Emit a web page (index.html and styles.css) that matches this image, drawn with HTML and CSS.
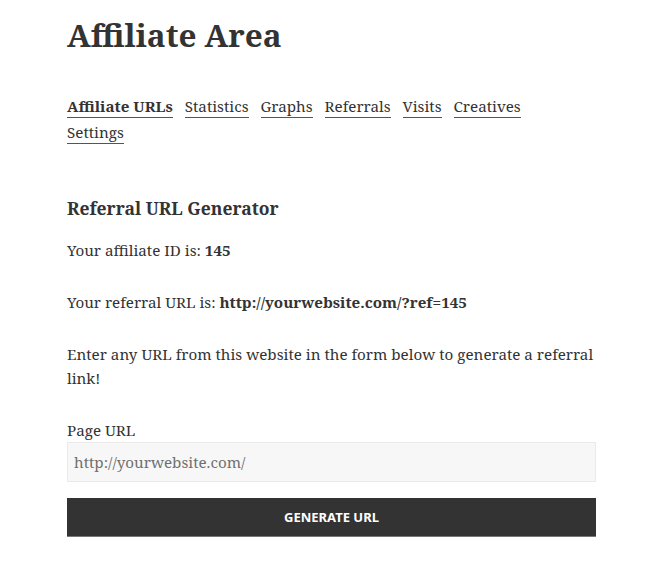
FILE: index.html
```html
<!DOCTYPE html>
<html lang="en">
<head>
<meta charset="utf-8">
<title>Affiliate Area</title>
<link rel="stylesheet" href="styles.css">
</head>
<body>
<main class="page">
  <h1 class="title">Affiliate Area</h1>
  <nav class="tabs">
    <a class="tab tab-active" href="#">Affiliate URLs</a>
    <a class="tab" href="#">Statistics</a>
    <a class="tab" href="#">Graphs</a>
    <a class="tab" href="#">Referrals</a>
    <a class="tab" href="#">Visits</a>
    <a class="tab" href="#">Creatives</a>
    <a class="tab" href="#">Settings</a>
  </nav>
  <section class="generator">
    <h2 class="heading">Referral URL Generator</h2>
    <p class="para">Your affiliate ID is: <strong>145</strong></p>
    <p class="para">Your referral URL is: <strong>http://yourwebsite.com/?ref=145</strong></p>
    <p class="para">Enter any URL from this website in the form below to generate a referral link!</p>
    <form class="form">
      <label class="label" for="url">Page URL</label>
      <input class="input" id="url" type="text" value="http://yourwebsite.com/">
      <button class="button" type="button">Generate URL</button>
    </form>
  </section>
</main>
</body>
</html>
```
FILE: styles.css
```css
* { box-sizing: border-box; }
html, body { margin: 0; padding: 0; background: #fff; }
body {
  font-family: "Noto Serif", "DejaVu Serif", serif;
  color: #333;
  font-size: 15.2px;
  line-height: 24px;
}
.page {
  width: 529px;
  margin-left: 67px;
  padding-top: 15px;
}
.title {
  margin: 0;
  font-size: 31.5px;
  line-height: 40px;
  font-weight: 700;
  color: #333;
}
.tabs {
  display: flex;
  flex-wrap: wrap;
  column-gap: 12px;
  margin-top: 41px;
  font-size: 15.2px;
  max-width: 500px;
}
.tab {
  color: #333;
  text-decoration: none;
  border-bottom: 1px solid #555;
  line-height: 21px;
  margin-bottom: 4px;
}
.tab-active { font-weight: 700; }
.generator { margin-top: 48px; }
.heading {
  margin: 0 0 18px;
  font-size: 17.5px;
  line-height: 24px;
  font-weight: 700;
}
.para {
  margin: 0 0 28px;
}
.form { display: flex; flex-direction: column; }
.label { line-height: 24px; }
.input {
  height: 40px;
  border: 1px solid #eaeaea;
  background: #f7f7f7;
  color: #707070;
  font-family: "Noto Serif", "DejaVu Serif", serif;
  font-size: 15.2px;
  padding: 0 6px;
  margin: 0 0 16px;
}
.button {
  height: 39px;
  border: 0;
  border-bottom: 1px solid #777;
  background: #333;
  color: #fff;
  font-family: "Noto Sans", "Open Sans", sans-serif;
  font-weight: 700;
  font-size: 13px;
  text-transform: uppercase;
  padding: 0;
}
```
